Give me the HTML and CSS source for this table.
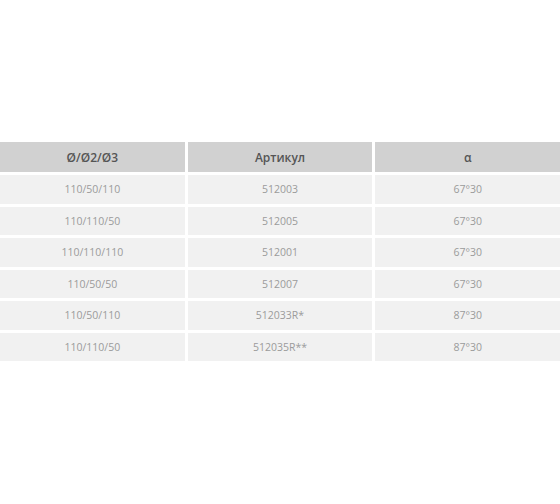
FILE: index.html
```html
<!DOCTYPE html>
<html>
<head>
<meta charset="utf-8">
<link rel="stylesheet" href="styles.css">
</head>
<body>
<div class="page">
  <div class="table">
    <div class="cell head">Ø/Ø2/Ø3</div>
    <div class="cell head">Артикул</div>
    <div class="cell head">α</div>

    <div class="cell">110/50/110</div>
    <div class="cell">512003</div>
    <div class="cell">67°30</div>

    <div class="cell">110/110/50</div>
    <div class="cell">512005</div>
    <div class="cell">67°30</div>

    <div class="cell">110/110/110</div>
    <div class="cell">512001</div>
    <div class="cell">67°30</div>

    <div class="cell">110/50/50</div>
    <div class="cell">512007</div>
    <div class="cell">67°30</div>

    <div class="cell">110/50/110</div>
    <div class="cell">512033R*</div>
    <div class="cell">87°30</div>

    <div class="cell">110/110/50</div>
    <div class="cell">512035R**</div>
    <div class="cell">87°30</div>
  </div>
</div>
</body>
</html>
```
FILE: styles.css
```css
html, body {
  margin: 0;
  padding: 0;
  background: #ffffff;
}
.page {
  width: 560px;
  padding-top: 142px;
}
.table {
  display: grid;
  grid-template-columns: 1fr 1fr 1fr;
  grid-template-rows: 30px repeat(6, 28.5px);
  column-gap: 3px;
  row-gap: 3px;
}
.cell {
  display: flex;
  align-items: center;
  justify-content: center;
  background: #f1f1f1;
  color: #9b9b9b;
  font-family: "Open Sans", "Noto Sans", sans-serif;
  font-size: 10.5px;
}
.cell.head {
  background: #d1d1d1;
  color: #555555;
  font-size: 12px;
  font-weight: 600;
}
```
